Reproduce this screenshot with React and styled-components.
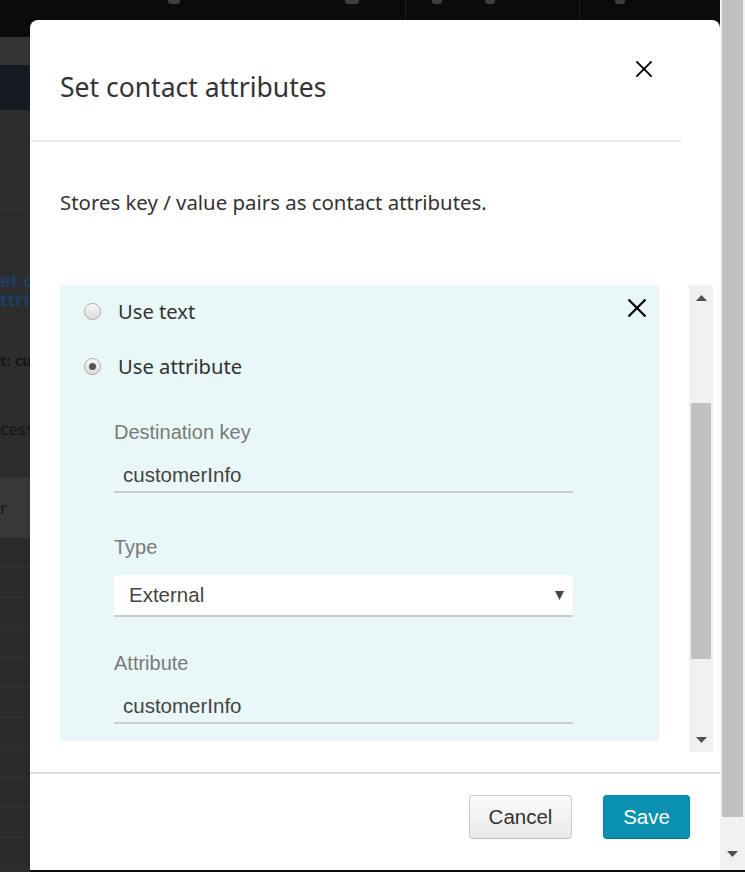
import React from 'react';
import styled, { createGlobalStyle, css } from 'styled-components';

const GlobalStyle = createGlobalStyle`
  html, body {
    margin: 0;
    padding: 0;
  }
  body {
    background: #0b0c0e;
    overflow: hidden;
  }
  * {
    box-sizing: border-box;
  }
`;

const Page = styled.div`
  display: flex;
  align-items: flex-start;
  width: 745px;
  height: 872px;
  overflow: hidden;
  background: #0b0c0e;
`;

const Stage = styled.div`
  position: relative;
  width: 720px;
  height: 872px;
  overflow: hidden;
`;

/* the app behind the dialog */
const Backdrop = styled.div`
  display: flex;
  flex-direction: column;
  height: 100%;
  font-family: "Noto Sans", sans-serif;
`;

const TopNav = styled.div`
  display: flex;
  align-items: flex-start;
  height: 37px;
  flex-shrink: 0;
  background: #0a0b0d;
`;

const NavMark = styled.span`
  display: block;
  margin-left: ${(p) => p.$ml}px;
  width: ${(p) => p.$w}px;
  height: ${(p) => p.$h || 4}px;
  background: ${(p) => p.$bg || '#3c3e42'};
  border-radius: 0 0 3px 3px;
`;

const Band = styled.div`
  display: flex;
  flex-direction: column;
  justify-content: center;
  width: 30px;
  height: ${(p) => p.$h}px;
  flex-shrink: 0;
  background: ${(p) => p.$bg};
  border-bottom: ${(p) => (p.$line ? '1px solid #363636' : 'none')};
  overflow: hidden;
  white-space: nowrap;
`;

const BackText = styled.span`
  display: block;
  font-size: ${(p) => p.$size || 17}px;
  line-height: ${(p) => p.$lh || 20}px;
  font-weight: ${(p) => (p.$bold ? 700 : 400)};
  color: ${(p) => p.$color || '#151515'};
`;

const Filler = styled.div`
  flex: 1;
  width: 30px;
  background: repeating-linear-gradient(
    to bottom,
    #2a2a2a 0px,
    #2a2a2a 29px,
    #333333 29px,
    #333333 30px
  );
`;

/* dialog */
const Modal = styled.div`
  position: absolute;
  top: 20px;
  left: 30px;
  width: 690px;
  height: 850px;
  background: #ffffff;
  border-radius: 8px 8px 0 0;
  display: flex;
  flex-direction: column;
`;

const Header = styled.header`
  display: flex;
  justify-content: space-between;
  align-items: flex-start;
  height: 122px;
  margin-right: 38px;
  padding: 0 29px 0 30px;
  border-bottom: 2px solid #eeeeee;
`;

const Title = styled.h2`
  margin: 50px 0 0;
  font-family: "Noto Sans", sans-serif;
  font-weight: 400;
  font-size: 26.5px;
  line-height: 35px;
  color: #333333;
`;

const IconButton = styled.button`
  display: flex;
  padding: 0;
  border: 0;
  background: none;
  cursor: pointer;
  margin-top: ${(p) => p.$mt || 0}px;
`;

const Body = styled.div`
  padding: 47px 7px 20px 30px;
`;

const Description = styled.p`
  margin: 0;
  font-family: "Noto Sans", sans-serif;
  font-size: 20.4px;
  line-height: 27px;
  color: #333333;
`;

const ScrollArea = styled.div`
  display: flex;
  align-items: flex-start;
  gap: 30px;
  margin-top: 69px;
  height: 467px;
`;

const Panel = styled.div`
  width: 599px;
  height: 456px;
  flex-shrink: 0;
  overflow: hidden;
  background: #e9f7f8;
  padding: 13px 12px 0 24px;
  display: flex;
  flex-direction: column;
`;

const TopRow = styled.div`
  display: flex;
  justify-content: space-between;
  align-items: flex-start;
`;

const RadioRow = styled.label`
  display: flex;
  align-items: center;
  gap: 17px;
  height: 27px;
  margin-top: ${(p) => p.$mt || 0}px;
  font-family: "Noto Sans", sans-serif;
  font-size: 20.2px;
  line-height: 27px;
  color: #333333;
`;

const Radio = styled.span`
  position: relative;
  width: 17px;
  height: 17px;
  flex-shrink: 0;
  border-radius: 50%;
  border: 1px solid #a9a9a9;
  background: linear-gradient(#f6f6f6, #dcdcdc);
  box-shadow: inset 0 1px 1px rgba(255, 255, 255, 0.8);

  ${(p) =>
    p.$checked &&
    css`
      &::after {
        content: '';
        position: absolute;
        top: 4px;
        left: 4px;
        width: 7px;
        height: 7px;
        border-radius: 50%;
        background: #555555;
      }
    `}
`;

const Fields = styled.div`
  padding-left: 30px;
  width: 489px;
`;

const Field = styled.div`
  margin-top: ${(p) => p.$mt}px;
`;

const Label = styled.div`
  font-family: "Liberation Sans", Arial, sans-serif;
  font-size: 20px;
  line-height: 24px;
  color: #7a7a7a;
`;

const TextInput = styled.input`
  display: block;
  width: 459px;
  height: 34px;
  margin-top: 15px;
  padding: 0 9px;
  border: 0;
  border-bottom: 2px solid #cccccc;
  background: transparent;
  font-family: "Liberation Sans", Arial, sans-serif;
  font-size: 20.5px;
  color: #444444;
  outline: none;
`;

const SelectBox = styled.div`
  display: flex;
  justify-content: space-between;
  align-items: center;
  width: 459px;
  height: 42px;
  margin-top: 16px;
  padding: 0 9px 0 15px;
  background: #ffffff;
  border-radius: 5px 5px 0 0;
  border-bottom: 2px solid #cccccc;
  font-family: "Liberation Sans", Arial, sans-serif;
  font-size: 20.5px;
  color: #444444;
`;

const ScrollTrack = styled.div`
  display: flex;
  flex-direction: column;
  width: ${(p) => p.$w}px;
  height: ${(p) => p.$h}px;
  flex-shrink: 0;
  background: #f1f1f1;
  padding: 0 2px;
`;

const ArrowButton = styled.div`
  display: flex;
  align-items: center;
  justify-content: center;
  height: ${(p) => p.$h}px;
  flex-shrink: 0;
  margin-bottom: ${(p) => p.$mb || 0}px;
`;

const ThumbSlot = styled.div`
  flex: 1;
`;

const Thumb = styled.div`
  margin-top: ${(p) => p.$top}px;
  height: ${(p) => p.$h}px;
  background: #c1c1c1;
`;

const Footer = styled.footer`
  display: flex;
  justify-content: flex-end;
  gap: 31px;
  padding: 21px 30px 0;
  border-top: 2px solid #dddddd;
`;

const Button = styled.button`
  width: ${(p) => p.$w}px;
  height: 44px;
  padding: 0;
  border-radius: 4px;
  font-family: "Liberation Sans", Arial, sans-serif;
  font-size: 20.5px;
  cursor: pointer;

  ${(p) =>
    p.$primary
      ? css`
          color: #ffffff;
          background: #0a90b0;
          border: 1px solid #0a87a5;
          border-bottom-color: #087490;
        `
      : css`
          color: #333333;
          background: linear-gradient(#fbfbfb, #e9e9e9);
          border: 1px solid #cccccc;
          border-bottom-color: #bdbdbd;
        `}
`;

const CloseIcon = ({ size, stroke }) => (
  <svg width={size} height={size} viewBox="0 0 20 20">
    <path d="M1.5 1.5 L18.5 18.5 M18.5 1.5 L1.5 18.5" stroke="#000" strokeWidth={stroke} fill="none" />
  </svg>
);

const Triangle = ({ down }) => (
  <svg width="11" height="6" viewBox="0 0 11 6">
    <path d={down ? 'M0 0 H11 L5.5 6 Z' : 'M0 6 H11 L5.5 0 Z'} fill="#505050" />
  </svg>
);

const Caret = () => (
  <svg width="9" height="9" viewBox="0 0 9 9">
    <path d="M0 0 H9 L4.5 9 Z" fill="#444444" />
  </svg>
);

const navMarks = [
  { ml: 168, w: 12 },
  { ml: 165, w: 14 },
  { ml: 46, w: 1, h: 20, bg: '#1e1f22' },
  { ml: 26, w: 10 },
  { ml: 43, w: 10 },
  { ml: 84, w: 1, h: 20, bg: '#1e1f22' },
  { ml: 35, w: 10 },
];

const fields = [
  { label: 'Destination key', value: 'customerInfo', mt: 40 },
  { label: 'Type', value: 'External', mt: 42, select: true },
  { label: 'Attribute', value: 'customerInfo', mt: 34 },
];

const App = () => {
  return (
    <Page>
      <GlobalStyle />
      <Stage>
        <Backdrop>
          <TopNav>
            {navMarks.map((m, i) => (
              <NavMark key={i} $ml={m.ml} $w={m.w} $h={m.h} $bg={m.bg} />
            ))}
          </TopNav>
          <Band $h={28} $bg="#343434" />
          <Band $h={45} $bg="#141922" />
          <Band $h={70} $bg="#2d2d2d" $line />
          <Band $h={30} $bg="#2d2d2d" $line />
          <Band $h={30} $bg="#2d2d2d" />
          <Band $h={100} $bg="#2d2d2d">
            <BackText $bold $size={18} $lh={19} $color="#1b3f66">et c</BackText>
            <BackText $bold $size={18} $lh={19} $color="#1b3f66">ttrib</BackText>
          </Band>
          <Band $h={40} $bg="#2d2d2d">
            <BackText $bold $size={15}>t: cu</BackText>
          </Band>
          <Band $h={98} $bg="#2d2d2d">
            <BackText $size={17}>cess</BackText>
          </Band>
          <Band $h={60} $bg="#383838">
            <BackText $size={17}>r</BackText>
          </Band>
          <Filler />
        </Backdrop>

        <Modal role="dialog" aria-label="Set contact attributes">
          <Header>
            <Title>Set contact attributes</Title>
            <IconButton $mt={40} aria-label="Close">
              <CloseIcon size={18} stroke={2} />
            </IconButton>
          </Header>

          <Body>
            <Description>Stores key / value pairs as contact attributes.</Description>

            <ScrollArea>
              <Panel>
                <TopRow>
                  <RadioRow>
                    <Radio />
                    Use text
                  </RadioRow>
                  <IconButton aria-label="Remove">
                    <CloseIcon size={20} stroke={2.2} />
                  </IconButton>
                </TopRow>
                <RadioRow $mt={28}>
                  <Radio $checked />
                  Use attribute
                </RadioRow>

                <Fields>
                  {fields.map((f) => (
                    <Field key={f.label} $mt={f.mt}>
                      <Label>{f.label}</Label>
                      {f.select ? (
                        <SelectBox>
                          <span>{f.value}</span>
                          <Caret />
                        </SelectBox>
                      ) : (
                        <TextInput readOnly value={f.value} />
                      )}
                    </Field>
                  ))}
                </Fields>
              </Panel>

              <ScrollTrack $w={24} $h={467}>
                <ArrowButton $h={26}>
                  <Triangle />
                </ArrowButton>
                <ThumbSlot>
                  <Thumb $top={92} $h={256} />
                </ThumbSlot>
                <ArrowButton $h={25}>
                  <Triangle down />
                </ArrowButton>
              </ScrollTrack>
            </ScrollArea>
          </Body>

          <Footer>
            <Button $w={103}>Cancel</Button>
            <Button $w={87} $primary>Save</Button>
          </Footer>
        </Modal>
      </Stage>

      <ScrollTrack $w={25} $h={870}>
        <Thumb $top={0} $h={817} />
        <ThumbSlot />
        <ArrowButton $h={28} $mb={2}>
          <Triangle down />
        </ArrowButton>
      </ScrollTrack>
    </Page>
  );
};

export default App;
